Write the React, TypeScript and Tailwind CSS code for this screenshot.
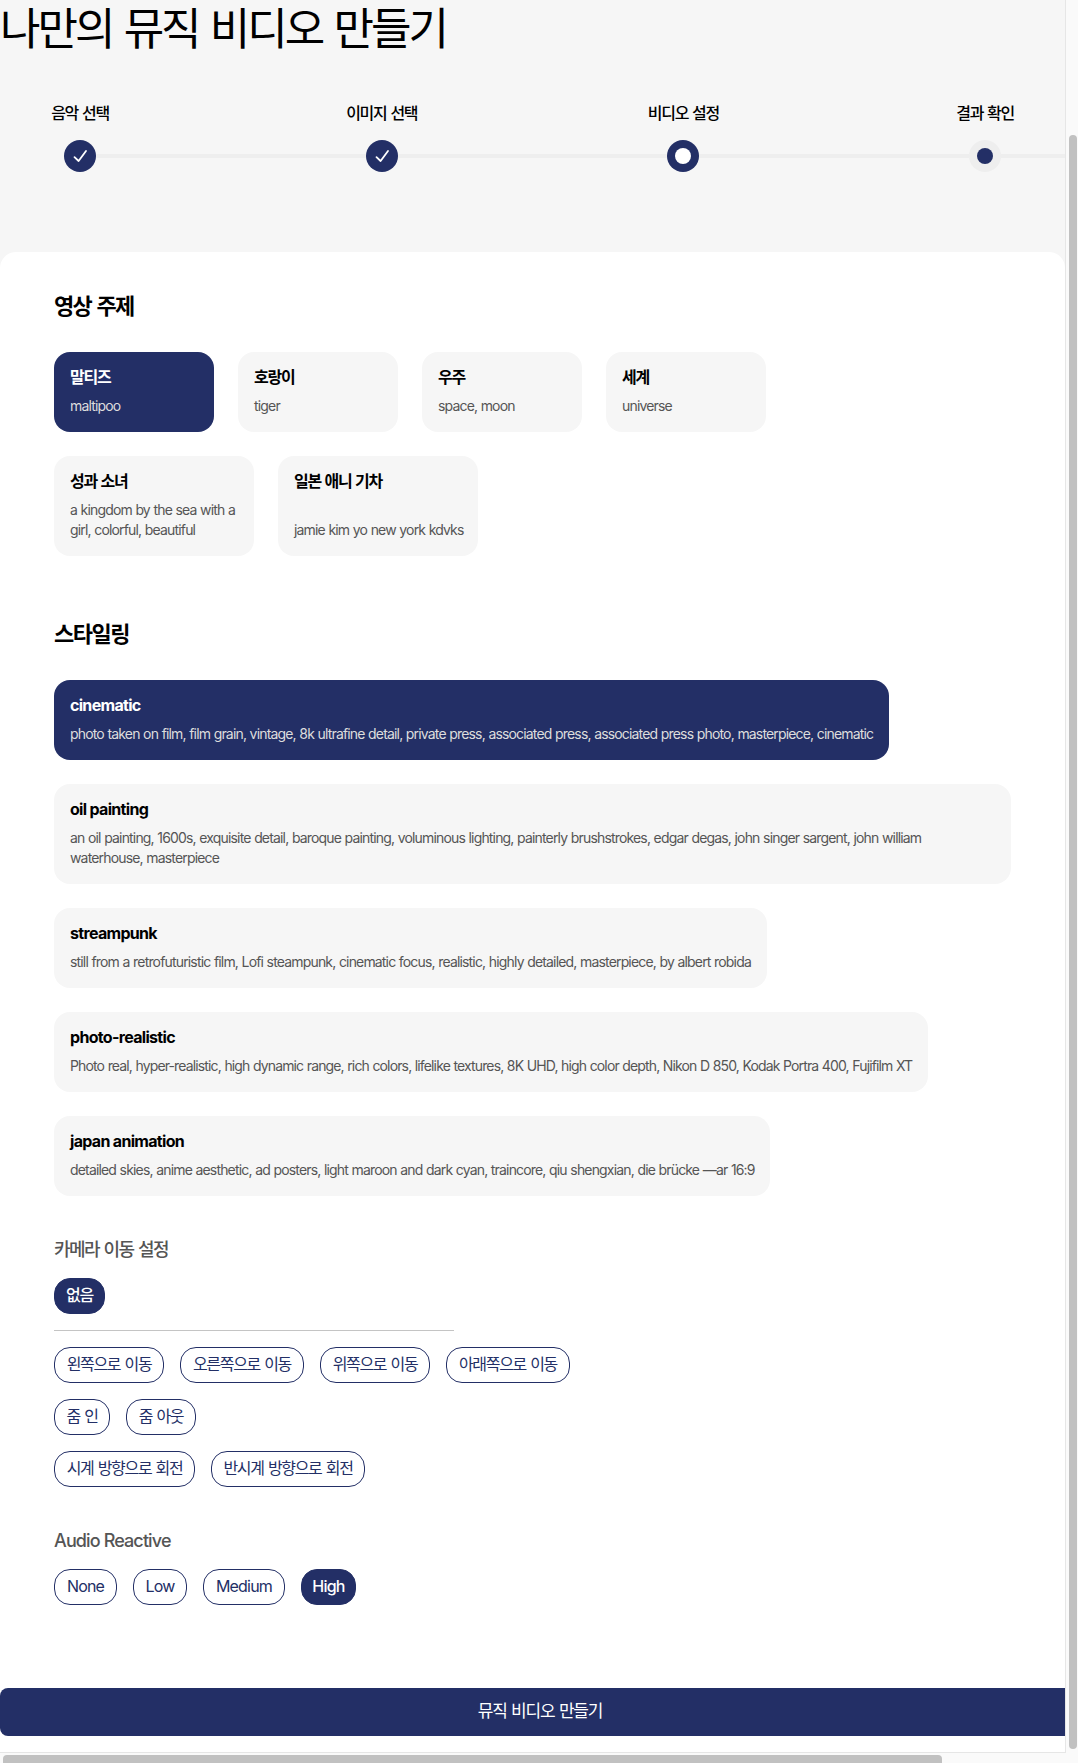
type CardData = { title: string; text: string; box: string; selected?: boolean };

const steps = [
  { label: "음악 선택", state: "done" },
  { label: "이미지 선택", state: "done" },
  { label: "비디오 설정", state: "current" },
  { label: "결과 확인", state: "next" },
];

const topicRows: CardData[][] = [
  [
    { title: "말티즈", text: "maltipoo", box: "w-40", selected: true },
    { title: "호랑이", text: "tiger", box: "w-40" },
    { title: "우주", text: "space, moon", box: "w-40" },
    { title: "세계", text: "universe", box: "w-40" },
  ],
  [
    { title: "성과 소녀", text: "a kingdom by the sea with a\ngirl, colorful, beautiful", box: "w-[200px]" },
    { title: "일본 애니 기차", text: "jamie kim yo new york kdvks", box: "w-[200px]" },
  ],
];

const styles: CardData[] = [
  {
    title: "cinematic",
    text: "photo taken on film, film grain, vintage, 8k ultrafine detail, private press, associated press, associated press photo, masterpiece, cinematic",
    box: "w-[835px]",
    selected: true,
  },
  {
    title: "oil painting",
    text: "an oil painting, 1600s, exquisite detail, baroque painting, voluminous lighting, painterly brushstrokes, edgar degas, john singer sargent, john william\nwaterhouse, masterpiece",
    box: "w-[957px]",
  },
  {
    title: "streampunk",
    text: "still from a retrofuturistic film, Lofi steampunk, cinematic focus, realistic, highly detailed, masterpiece, by albert robida",
    box: "w-[713px]",
  },
  {
    title: "photo-realistic",
    text: "Photo real, hyper-realistic, high dynamic range, rich colors, lifelike textures, 8K UHD, high color depth, Nikon D 850, Kodak Portra 400, Fujifilm XT",
    box: "w-[874px]",
  },
  {
    title: "japan animation",
    text: "detailed skies, anime aesthetic, ad posters, light maroon and dark cyan, traincore, qiu shengxian, die brücke —ar 16:9",
    box: "w-[716px]",
  },
];

const cameraRows = [
  [
    { label: "왼쪽으로 이동", box: "w-[110px]" },
    { label: "오른쪽으로 이동", box: "w-[124px]" },
    { label: "위쪽으로 이동", box: "w-[110px]" },
    { label: "아래쪽으로 이동", box: "w-[124px]" },
  ],
  [
    { label: "줌 인", box: "w-14" },
    { label: "줌 아웃", box: "w-[70px]" },
  ],
  [
    { label: "시계 방향으로 회전", box: "w-[141px]" },
    { label: "반시계 방향으로 회전", box: "w-[154px]" },
  ],
];

const reactive = [
  { label: "None", box: "w-[63px]" },
  { label: "Low", box: "w-[54px]" },
  { label: "Medium", box: "w-[82px]" },
  { label: "High", box: "w-[55px]", selected: true },
];

function StepDot({ state }: { state: string }) {
  if (state === "done") {
    return (
      <div className="flex size-8 items-center justify-center rounded-full bg-[#232f66]">
        <svg width="32" height="32" viewBox="0 0 32 32" fill="none">
          <path d="M10.5 17.2L14.6 21L22 11" stroke="white" strokeWidth="1.8" strokeLinecap="round" strokeLinejoin="round" />
        </svg>
      </div>
    );
  }
  const current = state === "current";
  return (
    <div className={`flex size-8 items-center justify-center rounded-full ${current ? "bg-[#232f66]" : "bg-[#eeeeee]"}`}>
      <div className={`size-4 rounded-full ${current ? "bg-white" : "bg-[#232f66]"}`} />
    </div>
  );
}

function Card({ card }: { card: CardData }) {
  return (
    <div
      className={`flex flex-col justify-between rounded-2xl px-4 pt-[15px] pb-4 ${card.box} ${
        card.selected ? "bg-[#232f66]" : "bg-[#f6f6f6]"
      }`}
    >
      <div
        className={`mb-[9px] text-base leading-5 font-bold whitespace-nowrap ${
          /^[a-z]/.test(card.title) ? "tracking-[-0.043em]" : "tracking-[-0.08em] [word-spacing:0.07em]"
        } ${card.selected ? "text-white" : "text-black"}`}
      >
        {card.title}
      </div>
      <div
        className={`text-sm leading-5 whitespace-pre [word-spacing:0.03em] ${
          card.title === "photo-realistic" ? "tracking-[-0.0615em]" : "tracking-[-0.0595em]"
        } ${card.selected ? "text-[#dddddd]" : "text-[#555555]"}`}
      >
        {card.text}
      </div>
    </div>
  );
}

function Pill({ label, box, selected }: { label: string; box: string; selected?: boolean }) {
  return (
    <button
      className={`flex h-9 items-center justify-center rounded-2xl border border-[#232f66] pb-0.5 text-base leading-5 whitespace-nowrap ${
        /^[A-Z]/.test(label) ? "tracking-[-0.05em]" : "tracking-[-0.083em] [word-spacing:0.07em]"
      } ${box} ${selected ? "bg-[#232f66] font-medium text-white" : "bg-white text-[#232f66]"}`}
    >
      {label}
    </button>
  );
}

export default function App() {
  return (
    <div className="flex h-[1763px] w-[1078px] flex-col overflow-hidden bg-[#fafafa] font-['Inter','Noto_Sans_CJK_KR',sans-serif]">
      <div className="flex h-[1756px]">
        <div className="h-[1753px] w-[1066px] overflow-hidden border-r border-b border-[#e6e6e6] bg-[#f6f6f6]">
          <h1 className="h-[101px] pt-0.5 text-[44px] leading-[55px] font-normal tracking-[-0.069em] whitespace-nowrap text-black [word-spacing:0.045em]">
            나만의 뮤직 비디오 만들기
          </h1>
          <div className="h-[151px] w-[1300px] pl-[29px]">
            <div className="flex">
              {steps.map((s) => (
                <div key={s.label} className="flex w-[301.7px] flex-col">
                  <div className="w-[102px] text-center text-base leading-6 font-medium tracking-[-0.083em] [word-spacing:0.07em]">
                    {s.label}
                  </div>
                  <div className="mt-[15px] flex items-center">
                    <div className="w-[35px]" />
                    <StepDot state={s.state} />
                    <div className="-mr-[35px] h-1 flex-1 bg-[#eeeeee]" />
                  </div>
                </div>
              ))}
            </div>
          </div>

          <div className="h-[1500px] rounded-t-2xl bg-white">
            <div className="h-[1436px] px-[54px] pt-[39px]">
              <h2 className="text-[22px] leading-[30px] font-semibold tracking-[-0.078em] text-black [word-spacing:0.07em]">
                영상 주제
              </h2>
              <div className="mt-[31px] flex flex-col gap-6">
                {topicRows.map((row, i) => (
                  <div key={i} className="flex gap-6">
                    {row.map((c) => (
                      <Card key={c.title} card={c} />
                    ))}
                  </div>
                ))}
              </div>

              <h2 className="mt-[63px] text-[22px] leading-[30px] font-semibold tracking-[-0.066em] text-black">스타일링</h2>
              <div className="mt-[31px] flex flex-col gap-6">
                {styles.map((c) => (
                  <Card key={c.title} card={c} />
                ))}
              </div>

              <h3 className="mt-[41px] text-lg leading-[26px] font-medium tracking-[-0.086em] text-[#555555] [word-spacing:0.07em]">
                카메라 이동 설정
              </h3>
              <div className="mt-[15px]">
                <Pill label="없음" box="w-[51px]" selected />
              </div>
              <div className="mt-4 h-px w-[400px] bg-[#c4c4c4]" />
              <div className="mt-4 flex flex-col gap-4">
                {cameraRows.map((row, i) => (
                  <div key={i} className="flex gap-4">
                    {row.map((p) => (
                      <Pill key={p.label} {...p} />
                    ))}
                  </div>
                ))}
              </div>

              <h3 className="mt-[41px] text-lg leading-[26px] font-medium tracking-[-0.049em] text-[#555555]">Audio Reactive</h3>
              <div className="mt-[15px] flex gap-4">
                {reactive.map((p) => (
                  <Pill key={p.label} {...p} />
                ))}
              </div>
            </div>
            <button className="flex h-12 w-[1080px] items-center justify-center rounded-lg bg-[#232f66] text-[17px] font-normal tracking-[-0.07em] text-white [word-spacing:0.05em]">
              뮤직 비디오 만들기
            </button>
          </div>
        </div>
        <div className="pt-[135px] pl-[3px]">
          <div className="h-[1614px] w-2 rounded-full bg-[#c1c1c1]" />
        </div>
      </div>
      <div className="ml-[3px] h-2 w-[939px] shrink-0 rounded-t bg-[#c1c1c1]" />
    </div>
  );
}
